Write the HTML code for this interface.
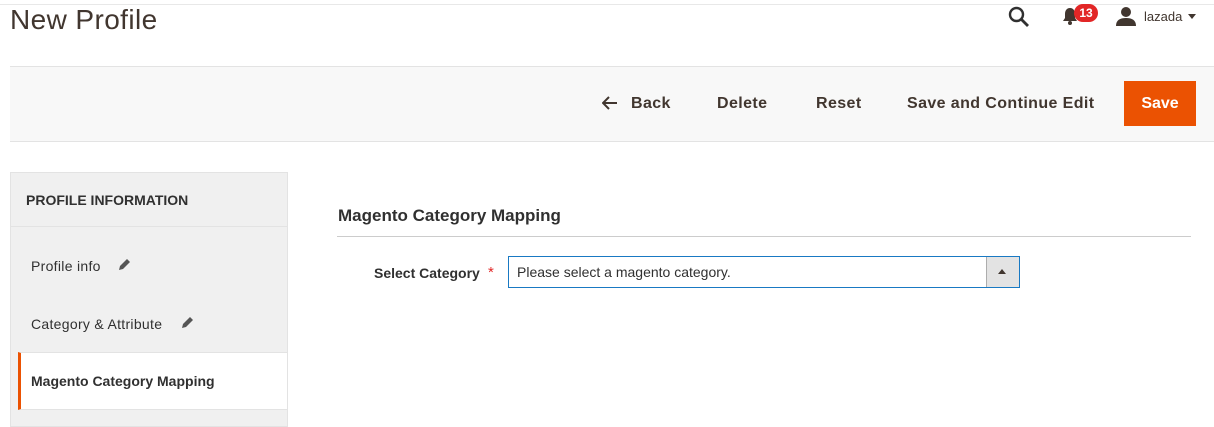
<!DOCTYPE html><html><head><style>
body{margin:0;width:1214px;height:425px;overflow:hidden;background:#fff;font-family:"Liberation Sans",sans-serif;color:#303030;position:relative}
.a{position:absolute}
.topline{left:0;top:0;width:1214px;height:4px;border-bottom:1px solid #e8e8e8}
h1{position:absolute;left:10px;top:4px;margin:0;font-weight:normal;font-size:28px;color:#41362f;letter-spacing:0.4px}
.bar{left:10px;top:66px;width:1204px;height:74px;background:#f8f8f8;border-top:1px solid #e3e3e3;border-bottom:1px solid #e3e3e3}
.btn{top:95px;font-size:16px;font-weight:bold;color:#41362f;letter-spacing:0.4px}
.save{left:1124px;top:81px;width:72px;height:45px;background:#eb5202;color:#fff;font-weight:bold;font-size:16px;text-align:center;line-height:45px}
.side{left:10px;top:172px;width:276px;height:253px;background:#f0f0f0;border:1px solid #e3e3e3}
.item{font-size:14px;color:#303030;letter-spacing:0.3px}
</style></head><body>
<div class="a topline"></div>
<h1>New Profile</h1>
<svg class="a" style="left:1008px;top:6px" width="22" height="22" viewBox="0 0 22 22"><circle cx="8.5" cy="8.5" r="6.5" fill="none" stroke="#303030" stroke-width="2.4"/><path d="M13 13L20 20" stroke="#303030" stroke-width="2.8"/></svg>
<svg class="a" style="left:1062px;top:7px" width="16" height="18" viewBox="0 0 16 18"><path d="M8 1C4.5 1 3 4 3 7v4l-2 3h14l-2-3V7c0-3-1.5-6-5-6z" fill="#41362f"/><circle cx="8" cy="16" r="2" fill="#41362f"/></svg>
<div class="a" style="left:1074px;top:4px;width:24px;height:18px;border-radius:9px;background:#e22626;color:#fff;font-size:12px;font-weight:bold;text-align:center;line-height:18px">13</div>
<svg class="a" style="left:1116px;top:6px" width="20" height="20" viewBox="0 0 20 20"><circle cx="10" cy="6" r="5" fill="#41362f"/><path d="M0 20c0-6 4-8 10-8s10 2 10 8z" fill="#41362f"/></svg>
<div class="a" style="left:1144px;top:9px;font-size:13px;color:#41362f">lazada</div>
<div class="a" style="left:1188px;top:14px;width:0;height:0;border-left:4px solid transparent;border-right:4px solid transparent;border-top:5px solid #41362f"></div>
<div class="a bar"></div>
<svg class="a" style="left:602px;top:96px" width="16" height="14" viewBox="0 0 16 14"><path d="M15 7H2M7 1L1 7l6 6" fill="none" stroke="#41362f" stroke-width="2"/></svg>
<div class="a btn" style="left:631px">Back</div>
<div class="a btn" style="left:717px">Delete</div>
<div class="a btn" style="left:816px">Reset</div>
<div class="a btn" style="left:907px">Save and Continue Edit</div>
<div class="a save">Save</div>
<div class="a side"></div>
<div class="a" style="left:11px;top:226px;width:276px;border-top:1px solid #e3e3e3"></div>
<div class="a" style="left:26px;top:192px;font-size:14px;font-weight:bold;color:#303030">PROFILE INFORMATION</div>
<div class="a item" style="left:31px;top:258px">Profile info</div>
<svg class="a" style="left:118px;top:258px" width="13" height="13" viewBox="0 0 13 13"><path d="M1 12l1-4 7-7 3 3-7 7z" fill="#555"/></svg>
<div class="a item" style="left:31px;top:316px">Category &amp; Attribute</div>
<svg class="a" style="left:181px;top:316px" width="13" height="13" viewBox="0 0 13 13"><path d="M1 12l1-4 7-7 3 3-7 7z" fill="#555"/></svg>
<div class="a" style="left:18px;top:352px;width:269px;height:58px;background:#fff;border-top:1px solid #e3e3e3;border-bottom:1px solid #e3e3e3;box-sizing:border-box;border-left:3px solid #eb5202"></div>
<div class="a" style="left:31px;top:373px;font-size:14px;font-weight:bold;color:#303030">Magento Category Mapping</div>
<div class="a" style="left:338px;top:206px;font-size:17px;font-weight:bold;color:#303030">Magento Category Mapping</div>
<div class="a" style="left:337px;top:236px;width:854px;border-top:1px solid #ccc"></div>
<div class="a" style="left:374px;top:265px;font-size:14px;font-weight:bold;color:#303030">Select Category</div>
<div class="a" style="left:488px;top:264px;font-size:15px;color:#e22626">*</div>
<div class="a" style="left:508px;top:256px;width:510px;height:30px;border:1px solid #1979c3;background:#fff"></div>
<div class="a" style="left:986px;top:257px;width:32px;height:30px;background:#e3e3e3;border-left:1px solid #adadad"></div>
<div class="a" style="left:998px;top:269px;width:0;height:0;border-left:4px solid transparent;border-right:4px solid transparent;border-bottom:5px solid #41362f"></div>
<div class="a" style="left:517px;top:264px;font-size:14px;color:#303030">Please select a magento category.</div>
</body></html>
